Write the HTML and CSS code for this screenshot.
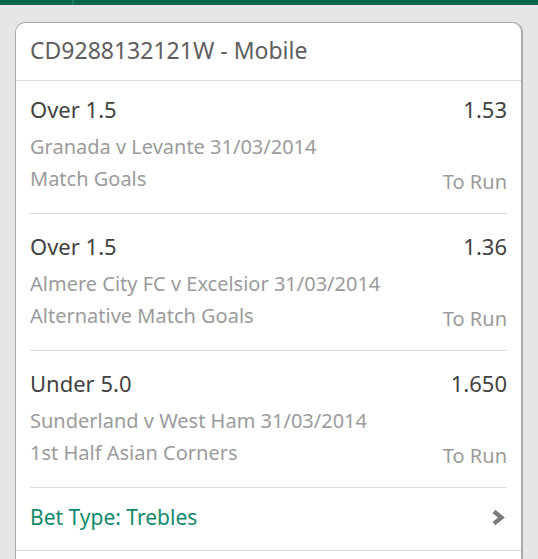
FILE: index.html
```html
<!DOCTYPE html>
<html>
    <head>
        <title>Bet Receipt</title>
        <link rel="stylesheet" href="styles.css">
    </head>
    <body>
        <div class="top-bar">
            <div class="top-tab"></div>
        </div>
        <div class="card">
            <div class="card-header">CD9288132121W - Mobile</div>

            <div class="leg first">
                <div class="leg-line">
                    <span class="selection">Over 1.5</span>
                    <span class="odds">1.53</span>
                </div>
                <div class="leg-line sub">
                    <span>Granada v Levante 31/03/2014</span>
                </div>
                <div class="leg-line sub">
                    <span>Match Goals</span>
                    <span class="status">To Run</span>
                </div>
            </div>

            <div class="leg">
                <div class="leg-line">
                    <span class="selection">Over 1.5</span>
                    <span class="odds">1.36</span>
                </div>
                <div class="leg-line sub">
                    <span>Almere City FC v Excelsior 31/03/2014</span>
                </div>
                <div class="leg-line sub">
                    <span>Alternative Match Goals</span>
                    <span class="status">To Run</span>
                </div>
            </div>

            <div class="leg">
                <div class="leg-line">
                    <span class="selection">Under 5.0</span>
                    <span class="odds">1.650</span>
                </div>
                <div class="leg-line sub">
                    <span>Sunderland v West Ham 31/03/2014</span>
                </div>
                <div class="leg-line sub">
                    <span>1st Half Asian Corners</span>
                    <span class="status">To Run</span>
                </div>
            </div>

            <div class="bet-type">
                <span class="bet-type-label">Bet Type: Trebles</span>
                <svg class="chevron" width="15" height="17" viewBox="0 0 15 17">
                    <path d="M3 2.5 L10.5 8.5 L3 14.5" fill="none" stroke="#7a7a7a" stroke-width="4.2"/>
                </svg>
            </div>
            <div class="card-rest"></div>
        </div>
    </body>
</html>
```

FILE: styles.css
```css
body {
    font-family: "Noto Sans", "Open Sans", sans-serif;
    background-color: #e6e6e6;
    margin: 0;
    padding: 0;
}

.top-bar {
    height: 5px;
    background-color: #03664a;
}

.top-tab {
    width: 72px;
    height: 5px;
    border-right: 2px solid #1f7a5e;
}

.card {
    margin: 17px 15px 0;
    background-color: #fff;
    border: 1px solid #a9a9a9;
    border-right-width: 2px;
    border-bottom: none;
    border-radius: 10px 10px 0 0;
    overflow: hidden;
}

.card-header {
    height: 57px;
    line-height: 54px;
    padding-left: 14px;
    font-size: 23px;
    color: #5e5e5e;
    border-bottom: 1px solid #dcdcdc;
}

.leg {
    margin: 0 14px;
    padding: 12px 0 18px;
    border-bottom: 1px solid #dcdcdc;
}

.leg.first {
    padding-top: 8px;
}

.leg-line {
    display: flex;
    justify-content: space-between;
    align-items: flex-start;
    height: 42px;
    line-height: 40px;
    font-size: 22px;
    color: #424242;
}

.leg-line.sub {
    height: 32px;
    line-height: 32px;
    font-size: 20px;
    color: #9b9b9b;
}

.status {
    position: relative;
    top: 3px;
}

.bet-type {
    display: flex;
    justify-content: space-between;
    align-items: center;
    height: 62px;
    padding: 0 14px;
    font-size: 21px;
    color: #12896a;
    border-bottom: 1px solid #dcdcdc;
}

.bet-type-label {
    margin-top: -4px;
}

.chevron {
    margin-right: 1px;
    margin-top: -4px;
}

.card-rest {
    height: 10px;
}
```
